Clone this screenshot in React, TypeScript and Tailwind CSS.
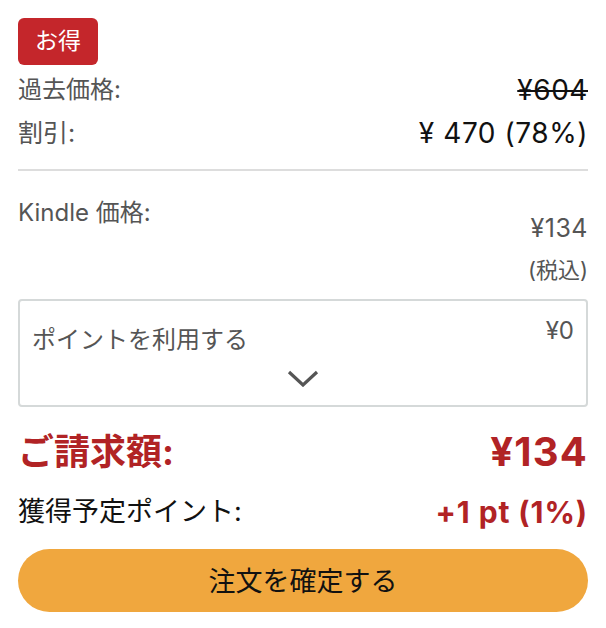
export default function App() {
  return (
    <div
      className="w-[606px] min-h-[628px] bg-white px-[18px] pt-[18px]"
      style={{ fontFamily: 'Inter, "Noto Sans CJK JP", sans-serif' }}
    >
      <div className="flex h-[47px] w-[80px] items-center justify-center rounded-[6px] bg-[#c4262b] text-[23px] text-white">
        お得
      </div>

      <div className="mt-[7px] flex items-center justify-between leading-[36px]">
        <span className="text-[24px] text-[#555]">過去価格:</span>
        <span className="text-[28px] tracking-[0.02em] text-[#111] line-through decoration-[2px]">¥604</span>
      </div>
      <div className="mt-[7px] flex items-center justify-between leading-[36px]">
        <span className="text-[25px] text-[#555]">割引:</span>
        <span className="text-[28px] tracking-[0.02em] text-[#111]">¥ 470 (78%)</span>
      </div>

      <div className="mt-[18px] h-[2px] bg-[#ddd]" />

      <div className="mt-[27px] flex items-start justify-between">
        <span className="text-[24px] leading-[30px] text-[#555]">Kindle 価格:</span>
        <div className="flex flex-col items-end pt-[15px] text-[#555]">
          <span className="text-[25px] tracking-[0.02em] leading-[30px]">¥134</span>
          <span className="mt-[12px] text-[22px] leading-[30px]">(税込)</span>
        </div>
      </div>

      <div className="mt-[14px] flex flex-col rounded-[4px] border-2 border-[#d5d9d9] px-3 pb-[18px]">
        <div className="flex items-start justify-between pt-[15px] text-[#555]">
          <span className="mt-[9px] text-[24px] leading-[30px]">ポイントを利用する</span>
          <span className="text-[24px] leading-[30px]">¥0</span>
        </div>
        <div className="mt-[15px] flex justify-center">
          <svg width="32" height="17" viewBox="0 0 32 17" fill="none">
            <path d="M2 2 L16 15 L30 2" stroke="#555" strokeWidth="3.2" />
          </svg>
        </div>
      </div>

      <div className="mt-[25px] flex h-[40px] items-center justify-between font-bold text-[#b12325]">
        <span className="text-[36px]">ご請求額:</span>
        <span className="text-[40px] tracking-[0.03em]">¥134</span>
      </div>

      <div className="mt-[22px] flex h-[36px] items-center justify-between">
        <span className="text-[27px] text-[#111]">獲得予定ポイント:</span>
        <span className="text-[30px] tracking-[0.03em] font-bold text-[#b12325]">+1 pt (1%)</span>
      </div>

      <button className="mt-[19px] flex h-[63px] w-full items-center justify-center rounded-full bg-[#f0a73e] pt-[3px] text-[27px] text-[#111]">
        注文を確定する
      </button>
    </div>
  );
}
